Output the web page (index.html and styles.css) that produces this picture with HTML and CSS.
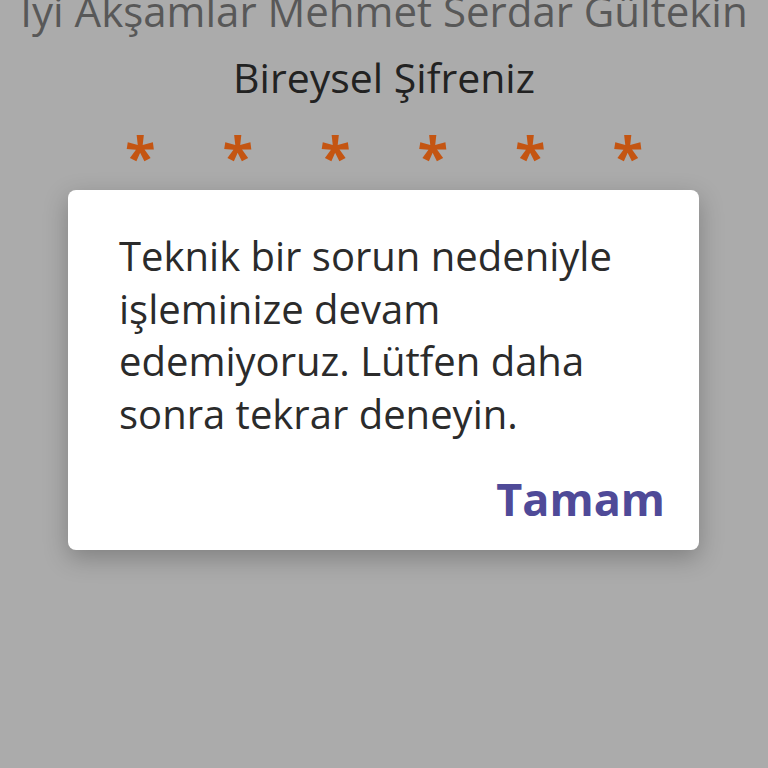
FILE: index.html
```html
<!DOCTYPE html>
<html lang="tr">
<head>
  <meta charset="UTF-8" />
  <meta name="viewport" content="width=device-width, initial-scale=1.0" />
  <title>Bireysel Şifreniz</title>
  <link rel="stylesheet" href="styles.css">
</head>
<body>
  <div class="screen">
    <h1 class="greeting">İyi Akşamlar Mehmet Serdar Gültekin</h1>
    <h2 class="title">Bireysel Şifreniz</h2>
    <div class="pin">
      <span>*</span><span>*</span><span>*</span><span>*</span><span>*</span><span>*</span>
    </div>
  </div>

  <div class="dialog">
    <p class="message">Teknik bir sorun nedeniyle işleminize devam edemiyoruz. Lütfen daha sonra tekrar deneyin.</p>
    <div class="actions">
      <button class="ok">Tamam</button>
    </div>
  </div>
</body>
</html>
```

FILE: styles.css
```css
body {
  margin: 0;
  padding: 0;
  font-family: "Open Sans", sans-serif;
  background-color: #ababab;
  height: 768px;
  overflow: hidden;
}

.screen {
  display: flex;
  flex-direction: column;
  align-items: center;
}

.greeting {
  margin: -15px 0 0;
  font-size: 42px;
  font-weight: 400;
  color: #585858;
  white-space: nowrap;
  line-height: 52px;
}

.title {
  margin: 14px 0 0;
  font-size: 41px;
  font-weight: 400;
  color: #222;
  line-height: 52px;
}

.pin {
  display: flex;
  margin-top: 32px;
  font-size: 56px;
  font-weight: 700;
  color: #c45512;
  line-height: 40px;
  height: 40px;
}

.pin span {
  width: 97.5px;
  text-align: center;
}

.dialog {
  position: absolute;
  left: 68px;
  top: 190px;
  width: 631px;
  height: 360px;
  box-sizing: border-box;
  padding: 40px 34px 0 51px;
  background: #fff;
  border-radius: 8px;
  box-shadow: 0 8px 24px rgba(0, 0, 0, 0.25);
}

.message {
  margin: 0;
  width: 515px;
  font-size: 40px;
  line-height: 52.5px;
  color: #2b2b2b;
}

.actions {
  display: flex;
  justify-content: flex-end;
  margin-top: 33px;
}

.ok {
  border: none;
  background: none;
  padding: 0;
  font-family: "Open Sans", sans-serif;
  font-size: 45px;
  font-weight: 700;
  line-height: 52px;
  color: #4f4a98;
}
```
